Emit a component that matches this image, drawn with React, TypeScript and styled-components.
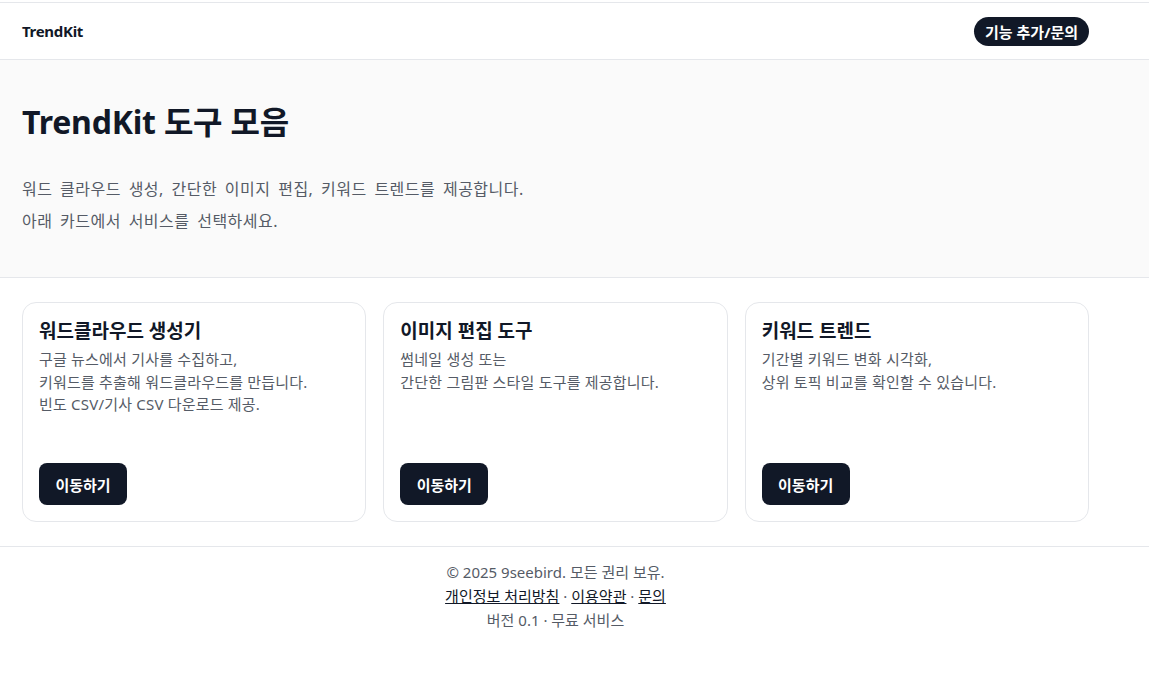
import React from 'react';
import styled, { createGlobalStyle } from 'styled-components';

const GlobalStyle = createGlobalStyle`
  html, body {
    margin: 0;
    padding: 0;
    background: #ffffff;
    font-family: "Noto Sans", "Noto Sans CJK KR", sans-serif;
    color: #111827;
  }
`;

const Page = styled.div`
  border-top: 2px solid transparent;
  min-height: 681px;
`;

const Header = styled.header`
  border-top: 1px solid #e5e7eb;
  border-bottom: 1px solid #e5e7eb;
  height: 56px;
`;

const Inner = styled.div`
  width: 1067px;
  margin-left: 22px;
  box-sizing: border-box;
`;

const HeaderRow = styled(Inner)`
  height: 100%;
  display: flex;
  align-items: center;
  justify-content: space-between;
`;

const Logo = styled.div`
  font-size: 15px;
  font-weight: 700;
  letter-spacing: -0.3px;
`;

const PillButton = styled.button`
  border: none;
  background: #111827;
  color: #fff;
  font-family: inherit;
  font-size: 15px;
  font-weight: 700;
  height: 29px;
  padding: 0 11px;
  border-radius: 999px;
  cursor: pointer;
`;

const Hero = styled.section`
  background: #fafafa;
  border-bottom: 1px solid #e5e7eb;
  padding: 40px 0 40px;
`;

const Title = styled.h1`
  margin: 0 0 29px;
  font-size: 32px;
  font-weight: 700;
  letter-spacing: -0.2px;
  line-height: 44px;
`;

const Lead = styled.p`
  margin: 0;
  font-size: 16px;
  line-height: 32px;
  letter-spacing: 0.5px;
  word-spacing: 3px;
  color: #555b66;
`;

const Cards = styled(Inner)`
  display: grid;
  grid-template-columns: repeat(3, 1fr);
  gap: 17px;
  padding: 24px 0;
`;

const Card = styled.div`
  border: 1px solid #e5e7eb;
  border-radius: 14px;
  padding: 14px 16px 16px;
  height: 220px;
  box-sizing: border-box;
  display: flex;
  flex-direction: column;
  align-items: flex-start;
`;

const CardTitle = styled.h3`
  margin: 0 0 3px;
  font-size: 19px;
  font-weight: 700;
  line-height: 28px;
`;

const CardDesc = styled.p`
  margin: 0;
  font-size: 15px;
  line-height: 22.5px;
  letter-spacing: 0.2px;
  color: #555b66;
`;

const GoButton = styled.button`
  margin-top: auto;
  border: none;
  background: #111827;
  color: #fff;
  font-family: inherit;
  font-size: 15px;
  font-weight: 700;
  width: 88px;
  height: 42px;
  border-radius: 8px;
  cursor: pointer;
`;

const Footer = styled.footer`
  border-top: 1px solid #e5e7eb;
  padding-top: 13px;
`;

const FooterInner = styled(Inner)`
  text-align: center;
  font-size: 15px;
  line-height: 24px;
  color: #555b66;
`;

const FooterLink = styled.a`
  color: #111827;
  text-decoration: underline;
`;

const tools = [
  {
    title: '워드클라우드 생성기',
    lines: ['구글 뉴스에서 기사를 수집하고,', '키워드를 추출해 워드클라우드를 만듭니다.', '빈도 CSV/기사 CSV 다운로드 제공.'],
  },
  {
    title: '이미지 편집 도구',
    lines: ['썸네일 생성 또는', '간단한 그림판 스타일 도구를 제공합니다.'],
  },
  {
    title: '키워드 트렌드',
    lines: ['기간별 키워드 변화 시각화,', '상위 토픽 비교를 확인할 수 있습니다.'],
  },
];

const App = () => {
  return (
    <Page>
      <GlobalStyle />
      <Header>
        <HeaderRow>
          <Logo>TrendKit</Logo>
          <PillButton>기능 추가/문의</PillButton>
        </HeaderRow>
      </Header>
      <Hero>
        <Inner>
          <Title>TrendKit 도구 모음</Title>
          <Lead>워드 클라우드 생성, 간단한 이미지 편집, 키워드 트렌드를 제공합니다.</Lead>
          <Lead>아래 카드에서 서비스를 선택하세요.</Lead>
        </Inner>
      </Hero>
      <Cards>
        {tools.map((t) => (
          <Card key={t.title}>
            <CardTitle>{t.title}</CardTitle>
            <CardDesc>
              {t.lines.map((l, i) => (
                <React.Fragment key={i}>
                  {l}
                  {i < t.lines.length - 1 && <br />}
                </React.Fragment>
              ))}
            </CardDesc>
            <GoButton>이동하기</GoButton>
          </Card>
        ))}
      </Cards>
      <Footer>
        <FooterInner>
          <div>© 2025 9seebird. 모든 권리 보유.</div>
          <div>
            <FooterLink href="#">개인정보 처리방침</FooterLink> · <FooterLink href="#">이용약관</FooterLink> ·{' '}
            <FooterLink href="#">문의</FooterLink>
          </div>
          <div>버전 0.1 · 무료 서비스</div>
        </FooterInner>
      </Footer>
    </Page>
  );
};

export default App;
